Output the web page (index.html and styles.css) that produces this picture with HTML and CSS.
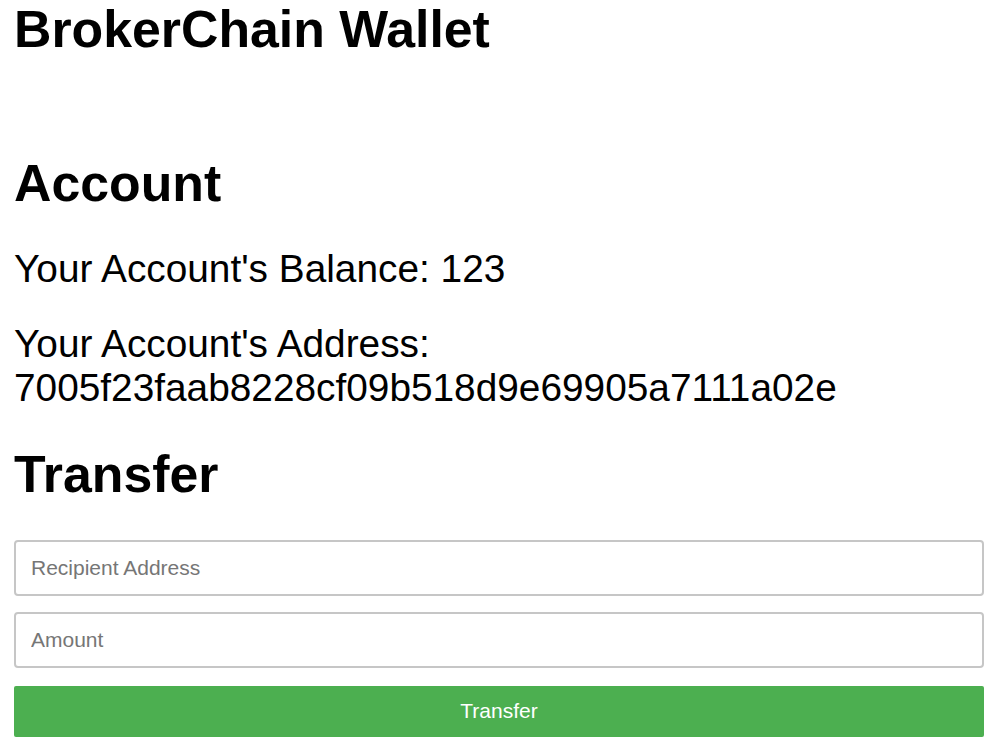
FILE: index.html
```html
<!DOCTYPE html>
<html lang="en">
<head>
<meta charset="utf-8">
<title>BrokerChain Wallet</title>
<link rel="stylesheet" href="styles.css">
</head>
<body>
<div class="app">
  <h1 class="title">BrokerChain Wallet</h1>
  <section class="account">
    <h2 class="section-title">Account</h2>
    <p class="info balance">Your Account's Balance: 123</p>
    <p class="info address">Your Account's Address: 7005f23faab8228cf09b518d9e69905a7111a02e</p>
  </section>
  <section class="transfer">
    <h2 class="section-title">Transfer</h2>
    <form class="transfer-form">
      <input class="field" type="text" placeholder="Recipient Address">
      <input class="field" type="text" placeholder="Amount">
      <button class="submit" type="button">Transfer</button>
    </form>
  </section>
</div>
</body>
</html>
```

FILE: styles.css
```css
html, body {
  margin: 0;
  padding: 0;
  background: #ffffff;
}

body {
  font-family: "Liberation Sans", Arial, sans-serif;
  color: #000000;
}

.app {
  padding: 0 12px 0 14px;
}

.title {
  font-size: 51.8px;
  line-height: 59px;
  font-weight: bold;
  margin: 0 0 95px;
}

.section-title {
  font-size: 51.8px;
  line-height: 59px;
  font-weight: bold;
  margin: 0;
}

.info {
  font-size: 38.8px;
  line-height: 44px;
  margin: 0;
}

.balance {
  margin-top: 34px;
}

.address {
  margin-top: 31px;
}

.transfer {
  margin-top: 35px;
}

.transfer-form {
  margin-top: 36px;
  display: flex;
  flex-direction: column;
}

.field {
  box-sizing: border-box;
  height: 56px;
  width: 100%;
  margin: 0 0 16px;
  padding: 0 15px;
  border: 2px solid #c6c6c6;
  border-radius: 4px;
  font-family: "Liberation Sans", Arial, sans-serif;
  font-size: 21px;
  color: #000;
  background: #fff;
  outline: none;
}

.field::placeholder {
  color: #767676;
}

.submit {
  box-sizing: border-box;
  height: 51px;
  width: 100%;
  margin-top: 2px;
  padding-bottom: 2px;
  border: none;
  border-radius: 2px;
  background: #4caf50;
  color: #ffffff;
  font-family: "Liberation Sans", Arial, sans-serif;
  font-size: 21px;
  cursor: pointer;
}
```
